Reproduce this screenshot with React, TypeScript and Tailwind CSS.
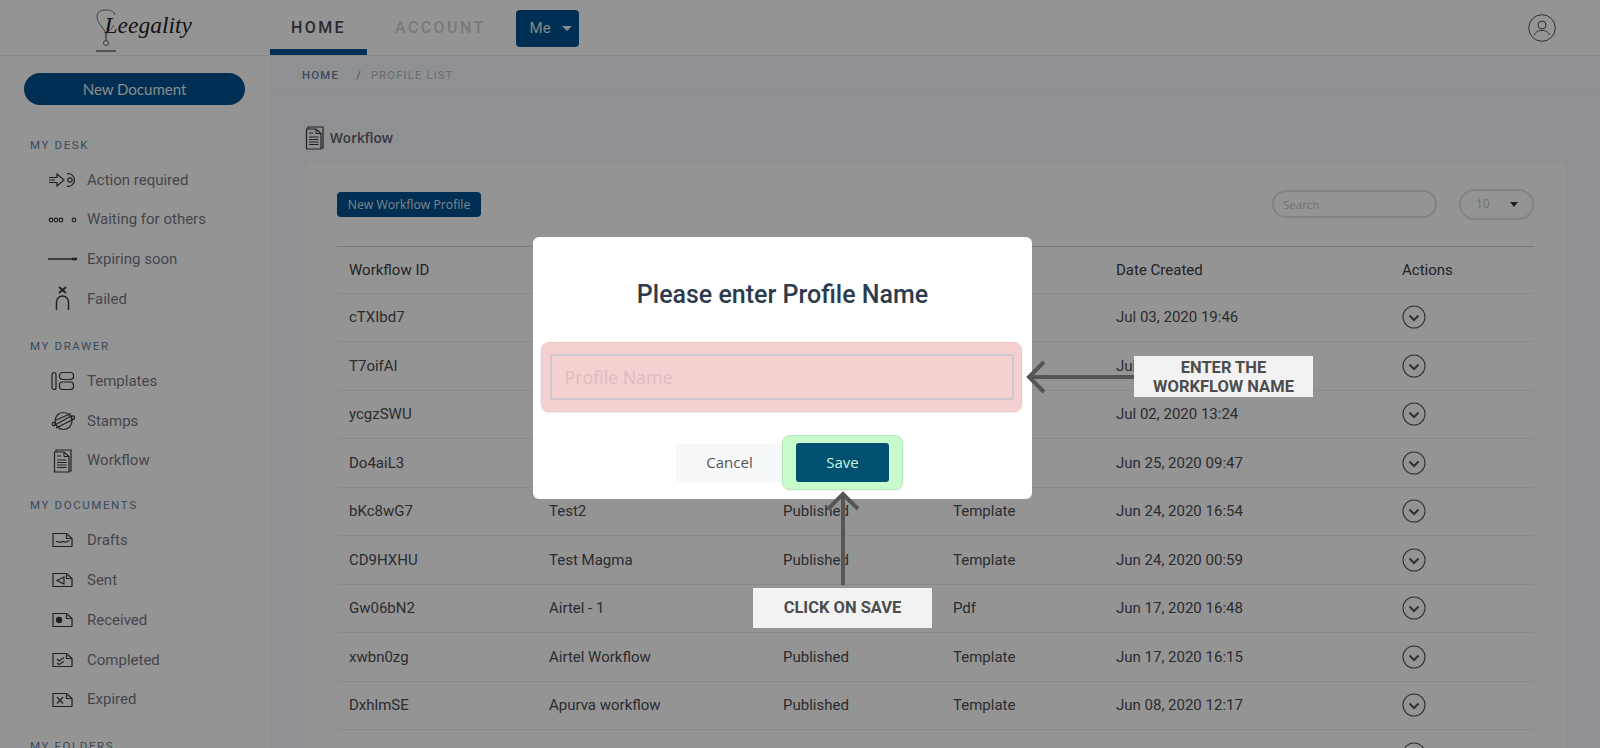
import React from "react";

const I = ({ w = 24, h = 24, vb, children, cls = "" }: { w?: number; h?: number; vb?: string; children: React.ReactNode; cls?: string }) => (
  <svg width={w} height={h} viewBox={vb ?? `0 0 ${w} ${h}`} fill="none" stroke="#3a3a3a" strokeWidth="1.2" className={cls}>
    {children}
  </svg>
);

const docShape = "M1 1.5H14.5L20 6.5V14.5H1Z";
const DocIcon = ({ children }: { children?: React.ReactNode }) => (
  <I w={22} h={16}>
    <path d={docShape} />
    <path d="M14.5 1.5V6.5H20" />
    {children}
  </I>
);

const icons: Record<string, React.ReactNode> = {
  action: (
    <I w={30} h={16}>
      <path d="M1 5.5H9V2L16 8L9 14V10.5H1M1 8H7" />
      <path d="M19 1.7A6.4 6.4 0 1 1 19 14.3" />
      <circle cx="22" cy="8" r="2.2" />
    </I>
  ),
  waiting: (
    <I w={30} h={10}>
      <circle cx="3" cy="5" r="1.8" />
      <circle cx="8" cy="5" r="1.8" />
      <circle cx="13" cy="5" r="1.8" />
      <circle cx="26" cy="5" r="1.8" />
    </I>
  ),
  expiring: (
    <I w={30} h={6}>
      <path d="M0 3H24" stroke="#6b6b6b" strokeWidth="2" />
      <path d="M24 3H29" strokeWidth="2.6" />
    </I>
  ),
  failed: (
    <I w={16} h={26}>
      <path d="M4 1L11 7M11 1L4 7" strokeWidth="1.8" />
      <path d="M1.5 24V16A6 6 0 0 1 13.5 16V24" strokeWidth="1.5" />
    </I>
  ),
  templates: (
    <I w={24} h={20}>
      <rect x="1" y="1.5" width="4" height="17" rx="2" />
      <rect x="8.5" y="1.5" width="14" height="7" rx="3" />
      <rect x="8.5" y="11" width="14" height="7.5" rx="3" />
    </I>
  ),
  stamps: (
    <I w={25} h={20}>
      <circle cx="12.5" cy="10" r="8.5" />
      <path d="M3 14.5L21 4.5" />
      <path d="M4 9.5L20 2.5M5 17L23 8" />
      <circle cx="2.8" cy="13" r="1.6" />
      <circle cx="22" cy="6.5" r="1.6" />
    </I>
  ),
  workflow: (
    <I w={20} h={24}>
      <path d="M3 3V1H18V22H16" />
      <path d="M1.5 3H11L16 7.5V23H1.5Z" />
      <path d="M11 3V7.5H16M4 7H8M4 11H13.5M4 13.5H13.5M4 16H13.5M4 18.5H13.5" strokeWidth="1" />
    </I>
  ),
  drafts: (
    <DocIcon>
      <path d="M4 10C6 7.5 7 12 9.5 10S12 11 14 10 16 8.5 17.5 8.5" />
    </DocIcon>
  ),
  sent: (
    <DocIcon>
      <path d="M12 5L5 8.5L12 12Z" />
    </DocIcon>
  ),
  received: (
    <DocIcon>
      <circle cx="7" cy="8" r="2.6" fill="#3a3a3a" />
    </DocIcon>
  ),
  completed: (
    <DocIcon>
      <path d="M5 7L7 9L12 5.5M5 11L7 12.5L12 9.5" />
    </DocIcon>
  ),
  expired: (
    <DocIcon>
      <path d="M5 5L11 11.5M11 5L5 11.5" />
    </DocIcon>
  ),
};

const NavItem = ({ icon, label }: { icon: string; label: string }) => (
  <div className="flex h-[39.8px] items-center">
    <div className="flex w-[87px] shrink-0 items-center justify-start pl-[47px]">
      <div className="flex w-[32px] justify-center">{icons[icon]}</div>
    </div>
    <span className="text-[15px] text-[#787885]">{label}</span>
  </div>
);

const Heading = ({ children, cls = "" }: { children: React.ReactNode; cls?: string }) => (
  <div className={`pl-[30px] text-[11.5px] leading-[16px] tracking-[0.14em] text-[#64809e] ${cls}`}>{children}</div>
);

const rows = [
  ["cTXIbd7", "Test Sign", "Published", "Template", "Jul 03, 2020 19:46"],
  ["T7oifAI", "Test Flow", "Published", "Template", "Jul 02, 2020 15:10"],
  ["ycgzSWU", "Test One", "Published", "Template", "Jul 02, 2020 13:24"],
  ["Do4aiL3", "Test3", "Published", "Template", "Jun 25, 2020 09:47"],
  ["bKc8wG7", "Test2", "Published", "Template", "Jun 24, 2020 16:54"],
  ["CD9HXHU", "Test Magma", "Published", "Template", "Jun 24, 2020 00:59"],
  ["Gw06bN2", "Airtel - 1", "Published", "Pdf", "Jun 17, 2020 16:48"],
  ["xwbn0zg", "Airtel Workflow", "Published", "Template", "Jun 17, 2020 16:15"],
  ["DxhlmSE", "Apurva workflow", "Published", "Template", "Jun 08, 2020 12:17"],
  ["mCn0Gw1", "order", "Published", "Pdf", "Jun 05, 2020 11:02"],
];

const ActionBtn = () => (
  <svg width="24" height="24" viewBox="0 0 24 24" fill="none" stroke="#555" strokeWidth="1.1">
    <circle cx="12" cy="12" r="11" />
    <path d="M7.5 10.5L12 15L16.5 10.5" strokeWidth="2" />
  </svg>
);

const cols = "grid grid-cols-[200px_234px_170px_163px_286px_1fr] pl-[12px]";

export default function App() {
  return (
    <div className="relative flex h-[748px] overflow-hidden bg-white font-['Roboto',sans-serif]">
      <aside className="w-[270px] shrink-0 bg-white">
        <div className="flex h-[56px] items-center justify-center border-b border-[#eeeeee]">
          <div className="relative ml-[9px] flex h-[48px] w-[90px] items-center">
            <svg width="22" height="48" viewBox="0 0 22 48" fill="none" stroke="#6f6f6f" strokeWidth="1" className="absolute left-[0px] top-0">
              <path d="M11 31C10 24 2 20 2 13C2 7 6 6 12 6C17 6 19 8 20 11" />
              <path d="M11 31C13 27 18 24 19 21" />
              <circle cx="11" cy="39" r="2.5" />
              <path d="M11 31V37M1 47H21" strokeWidth="1.4" />
            </svg>
            <span className="pb-[4px] pl-[10px] font-['Liberation_Serif',serif] text-[23.5px] italic leading-none text-[#222]">
              Leegality
            </span>
          </div>
        </div>
        <div className="px-[24px] pt-[17px]">
          <div className="flex h-[32px] w-[221px] items-center justify-center rounded-full bg-[#00528f] font-['Lato',sans-serif] text-[15px] text-[#e8eef5]">
            New Document
          </div>
        </div>
        <Heading cls="mt-[32px]">MY DESK</Heading>
        <div className="mt-[7px]">
          <NavItem icon="action" label="Action required" />
          <NavItem icon="waiting" label="Waiting for others" />
          <NavItem icon="expiring" label="Expiring soon" />
          <NavItem icon="failed" label="Failed" />
        </div>
        <Heading cls="mt-[19px]">MY DRAWER</Heading>
        <div className="mt-[7px]">
          <NavItem icon="templates" label="Templates" />
          <NavItem icon="stamps" label="Stamps" />
          <NavItem icon="workflow" label="Workflow" />
        </div>
        <Heading cls="mt-[16px]">MY DOCUMENTS</Heading>
        <div className="mt-[8px]">
          <NavItem icon="drafts" label="Drafts" />
          <NavItem icon="sent" label="Sent" />
          <NavItem icon="received" label="Received" />
          <NavItem icon="completed" label="Completed" />
          <NavItem icon="expired" label="Expired" />
        </div>
        <Heading cls="mt-[18px]">MY FOLDERS</Heading>
      </aside>

      <main className="flex min-w-0 flex-1 flex-col bg-[#f6f9ff]">
        <header className="flex h-[56px] shrink-0 items-center border-b border-[#eeeeee] bg-white pr-[44px]">
          <div className="flex h-full w-[97px] items-center justify-center border-b-[6px] border-[#00528f] pt-[7px] text-[16px] font-medium tracking-[0.15em] text-[#474757]">
            HOME
          </div>
          <div className="ml-[28px] text-[16px] font-medium tracking-[0.15em] text-[#d2d2d2]">ACCOUNT</div>
          <div className="ml-[30px] mt-[2px] flex h-[37px] w-[63px] items-center gap-[11px] rounded-[4px] bg-[#00528f] pl-[14px] text-[15px] text-[#dfe8f0]">
            <span>Me</span>
            <span className="h-0 w-0 border-x-[5px] border-t-[5px] border-x-transparent border-t-[#e8eef5]" />
          </div>
          <div className="ml-auto">
            <svg width="28" height="28" viewBox="0 0 28 28" fill="none" stroke="#555" strokeWidth="1">
              <circle cx="14" cy="14" r="13.3" />
              <circle cx="14" cy="11" r="4" />
              <path d="M6.5 21C8 17 11 16.5 14 16.5S20 17 21.5 21" />
            </svg>
          </div>
        </header>

        <div className="flex h-[38px] shrink-0 items-center gap-[17px] border-b border-[#eef0f5] pl-[32px] pt-[3px] tracking-[0.08em]">
          <span className="text-[11.3px] font-medium text-[#67839e]">HOME</span>
          <span className="text-[11px] text-[#b2bac4]">
            <span className="mr-[9px] text-[#6f8296]">/</span>PROFILE LIST
          </span>
        </div>

        <div className="flex items-center gap-[5px] pl-[35px] pt-[32px]">
          {icons.workflow}
          <span className="font-['Open_Sans',sans-serif] text-[13.6px] font-semibold text-[#5e5e68]">Workflow</span>
        </div>

        <section className="ml-[34px] mr-[33px] mt-[13px] flex-1 rounded-t-[8px] bg-white px-[33px] pt-[26px]">
          <div className="flex h-[30px] items-center">
            <div className="flex h-[25px] w-[144px] items-center justify-center rounded-[4px] bg-[#00528f] pt-[2px] font-['Open_Sans',sans-serif] text-[12.2px] text-[#d4e2ee]">
              New Workflow Profile
            </div>
            <div className="ml-auto flex h-[28px] w-[165px] items-center rounded-full border-2 border-[#dfdfe4] pl-[9px] pt-[1px] font-['Open_Sans',sans-serif] text-[11.5px] text-[#c4c4c4]">
              Search
            </div>
            <div className="ml-[22px] flex h-[31px] w-[75px] items-center justify-between rounded-full border-2 border-[#e2e2e2] pl-[15px] pr-[14px] font-['Open_Sans',sans-serif] text-[12px] text-[#bdbdbd]">
              10
              <span className="h-0 w-0 border-x-[4px] border-t-[5px] border-x-transparent border-t-[#333]" />
            </div>
          </div>

          <div className="mt-[27px] border-t border-[#d0d0d0]">
            <div className={`${cols} h-[45.5px] items-center pt-[1px] text-[15px] text-[#3c3c42]`}>
              <span>Workflow ID</span>
              <span>Workflow Name</span>
              <span>Status</span>
              <span>Type</span>
              <span>Date Created</span>
              <span>Actions</span>
            </div>
            {rows.map((r) => (
              <div key={r[0]} className={`${cols} h-[48.5px] items-center border-t border-[#eeeeee] text-[15px] text-[#4c4c52]`}>
                {r.map((c, i) => (
                  <span key={i}>{c}</span>
                ))}
                <ActionBtn />
              </div>
            ))}
          </div>
        </section>
      </main>

      {/* dimming layer */}
      <div className="absolute inset-0 bg-black/[0.42]" />

      {/* dialog */}
      <div className="absolute left-[533px] top-[237px] flex h-[262px] w-[499px] flex-col items-center rounded-[6px] bg-white pt-[40px]">
        <h2 className="text-[25px] font-medium leading-[36px] text-[#2d3b4e]">Please enter Profile Name</h2>
        <div className="ml-[8px] mt-[29px] flex h-[70px] w-[481px] items-center justify-center self-start rounded-[8px] border border-[#efc6c6] bg-[#f5d0d0] shadow-[0_1px_3px_rgba(0,0,0,0.08)]">
          <div className="flex h-[46px] w-[464px] items-center rounded-[2px] border-2 border-[#cfc6d0] pl-[13px] font-['Open_Sans',sans-serif] text-[17.8px] text-[#dcbcc0]">
            Profile Name
          </div>
        </div>
        <div className="mt-[23px] flex items-center self-start pl-[143px]">
          <div className="flex h-[38px] w-[107px] items-center justify-center rounded-[4px] bg-[#f7f8fa] font-['Open_Sans',sans-serif] text-[15px] text-[#555555]">
            Cancel
          </div>
          <div className="-ml-[1px] flex h-[55px] w-[121px] items-center justify-center rounded-[8px] border border-[#b6e8bc] bg-[#c8fbcc] shadow-[0_1px_3px_rgba(0,0,0,0.08)]">
            <div className="flex h-[39px] w-[93px] items-center justify-center rounded-[3px] bg-[#02506f] font-['Open_Sans',sans-serif] text-[15px] text-[#c5f5e0]">
              Save
            </div>
          </div>
        </div>
      </div>

      {/* annotations */}
      <svg width="112" height="36" viewBox="0 0 112 36" fill="none" stroke="#555555" strokeWidth="4" className="absolute left-[1026px] top-[359px]">
        <path d="M112 18H4" />
        <path d="M18 3L3 18L18 33" />
      </svg>
      <div className="absolute left-[1134px] top-[356px] flex h-[41px] w-[179px] items-center justify-center bg-[#f2f2f2] text-center text-[16.5px] font-bold leading-[19px] text-[#4d4d4d]">
        ENTER THE
        <br />
        WORKFLOW NAME
      </div>
      <svg width="36" height="94" viewBox="0 0 36 94" fill="none" stroke="#555555" strokeWidth="4" className="absolute left-[825px] top-[491px]">
        <path d="M18 94V4" />
        <path d="M3 18L18 3L33 18" />
      </svg>
      <div className="absolute left-[753px] top-[588px] flex h-[40px] w-[179px] items-center justify-center bg-[#f2f2f2] text-[16.5px] font-bold text-[#4d4d4d]">
        CLICK ON SAVE
      </div>
    </div>
  );
}
